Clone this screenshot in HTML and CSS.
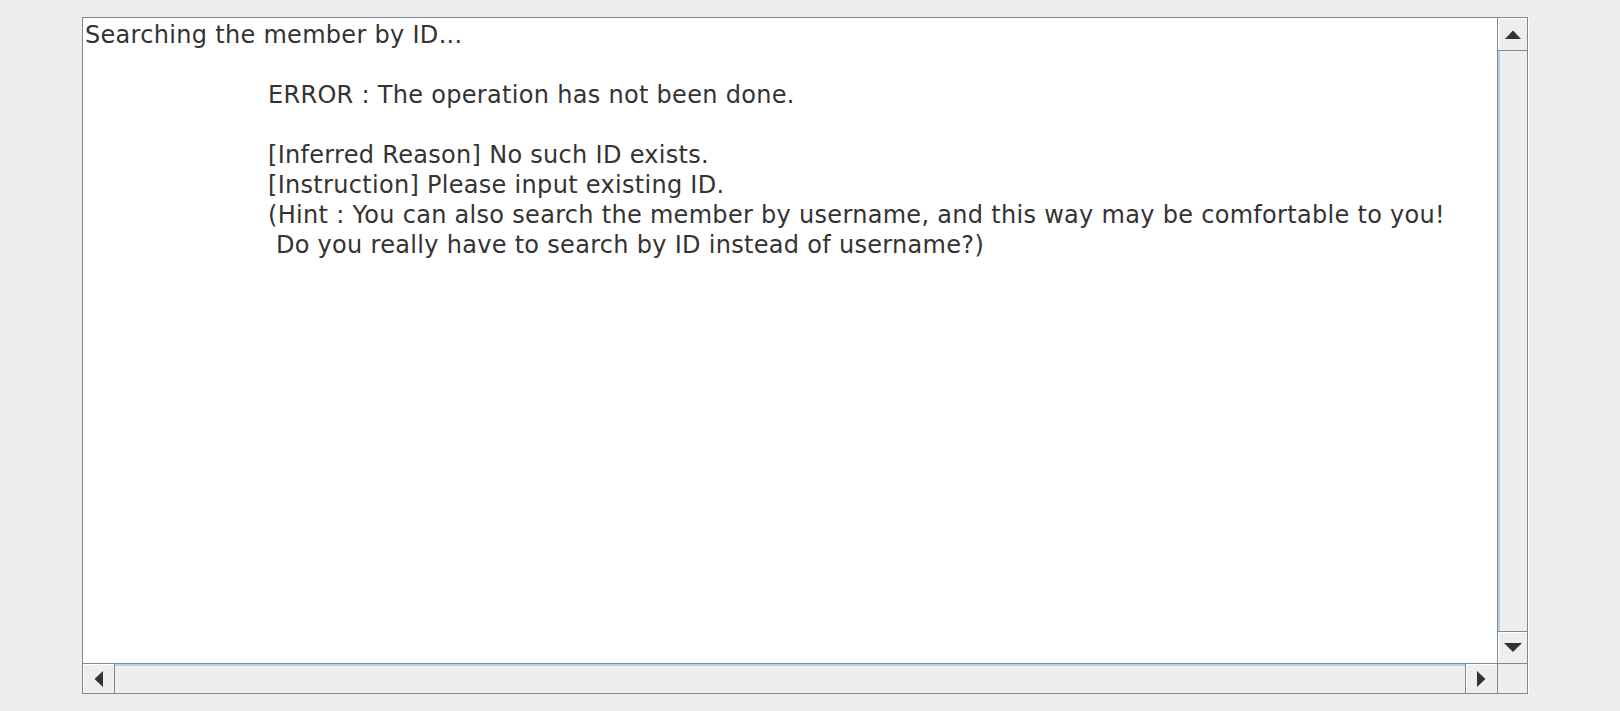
FILE: index.html
```html
<!DOCTYPE html>
<html>
<head>
<meta charset="utf-8">
<link rel="stylesheet" href="styles.css">
</head>
<body>
<div class="pane">
  <div class="textarea">
    <div class="line">Searching the member by ID...</div>
    <div class="indent">
      <div class="line blank"></div>
      <div class="line">ERROR : The operation has not been done.</div>
      <div class="line blank"></div>
      <div class="line">[Inferred Reason] No such ID exists.</div>
      <div class="line">[Instruction] Please input existing ID.</div>
      <div class="line">(Hint : You can also search the member by username, and this way may be comfortable to you!</div>
      <div class="line"> Do you really have to search by ID instead of username?)</div>
    </div>
  </div>
  <div class="vbar">
    <div class="btn up">
      <svg width="16" height="9" viewBox="0 0 16 9"><polygon points="0,9 8,0.5 16,9" fill="#333"/></svg>
    </div>
    <div class="vtrack"></div>
    <div class="btn down">
      <svg width="18" height="9" viewBox="0 0 18 9"><polygon points="0,0 18,0 9,9" fill="#333"/></svg>
    </div>
  </div>
  <div class="hbar">
    <div class="btn left">
      <svg width="9" height="16" viewBox="0 0 9 16"><polygon points="9,0 0.5,8 9,16" fill="#333"/></svg>
    </div>
    <div class="htrack"></div>
    <div class="btn right">
      <svg width="9" height="16" viewBox="0 0 9 16"><polygon points="0,0 8.5,8 0,16" fill="#333"/></svg>
    </div>
  </div>
  <div class="corner"></div>
</div>
</body>
</html>
```

FILE: styles.css
```css
html, body {
  margin: 0;
  padding: 0;
  background: #eeeeee;
}

body {
  padding: 17px 0 0 82px;
}

.pane {
  box-sizing: border-box;
  width: 1446px;
  height: 677px;
  border: 1px solid #7a8a99;
  display: grid;
  grid-template-columns: 1fr 30px;
  grid-template-rows: 1fr 30px;
  box-shadow: 1px 1px 0 #ffffff;
}

.textarea {
  background: #ffffff;
  padding: 2px 0 0 2px;
  font-family: "DejaVu Sans", sans-serif;
  font-size: 24px;
  line-height: 30px;
  color: #333333;
  overflow: hidden;
  letter-spacing: 0.3px;
}

.line {
  height: 30px;
  white-space: pre;
}

.indent {
  padding-left: 183px;
}

.vbar {
  border-left: 1px solid #7a8a99;
  display: flex;
  flex-direction: column;
  background: #eeeeee;
}

.hbar {
  border-top: 1px solid #7a8a99;
  display: flex;
  background: #eeeeee;
}

.btn {
  display: flex;
  align-items: center;
  justify-content: center;
  background: #eeeeee;
  box-sizing: border-box;
}

.btn svg {
  display: block;
}

.up {
  height: 33px;
  border-bottom: 1px solid #7a8a99;
  box-shadow: inset 1px 1px 0 #ffffff;
}

.down {
  height: 32px;
  border-top: 1px solid #7a8a99;
  box-shadow: inset 1px 1px 0 #ffffff;
}

.vtrack {
  flex: 1;
  border-left: 2px solid #b8cfe5;
}

.left {
  width: 32px;
  border-right: 1px solid #7a8a99;
  box-shadow: inset 1px 1px 0 #ffffff;
}

.right {
  width: 32px;
  border-left: 1px solid #7a8a99;
  box-shadow: inset 1px 1px 0 #ffffff;
}

.htrack {
  flex: 1;
  border-top: 2px solid #b8cfe5;
}

.corner {
  border-left: 1px solid #7a8a99;
  border-top: 1px solid #7a8a99;
  background: #eeeeee;
}
```
